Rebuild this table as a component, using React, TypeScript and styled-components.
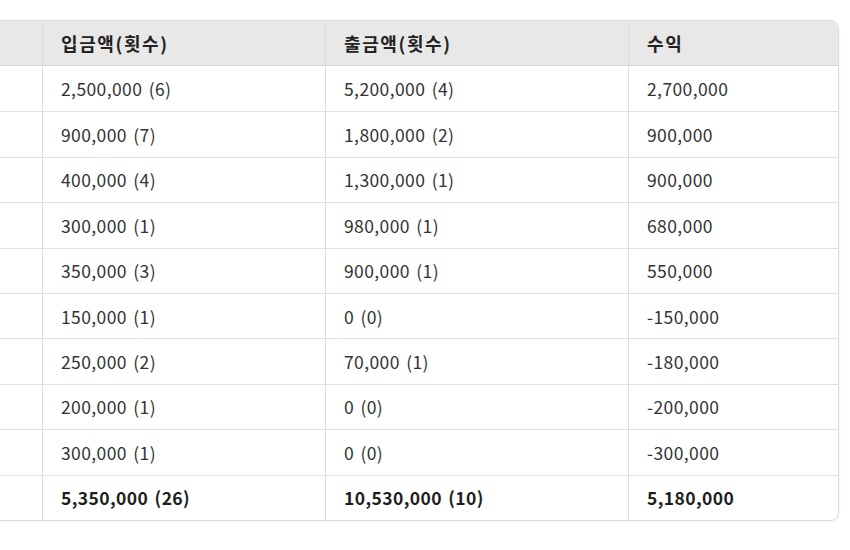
import React from "react";
import styled, { createGlobalStyle } from "styled-components";

// first column is cut off by the viewport in the reference, so its cells stay empty
const rows = [
  { id: 1, deposit: "2,500,000 (6)", withdraw: "5,200,000 (4)", profit: "2,700,000" },
  { id: 2, deposit: "900,000 (7)", withdraw: "1,800,000 (2)", profit: "900,000" },
  { id: 3, deposit: "400,000 (4)", withdraw: "1,300,000 (1)", profit: "900,000" },
  { id: 4, deposit: "300,000 (1)", withdraw: "980,000 (1)", profit: "680,000" },
  { id: 5, deposit: "350,000 (3)", withdraw: "900,000 (1)", profit: "550,000" },
  { id: 6, deposit: "150,000 (1)", withdraw: "0 (0)", profit: "-150,000" },
  { id: 7, deposit: "250,000 (2)", withdraw: "70,000 (1)", profit: "-180,000" },
  { id: 8, deposit: "200,000 (1)", withdraw: "0 (0)", profit: "-200,000" },
  { id: 9, deposit: "300,000 (1)", withdraw: "0 (0)", profit: "-300,000" },
];

const total = { deposit: "5,350,000 (26)", withdraw: "10,530,000 (10)", profit: "5,180,000" };

const App = () => {
  return (
    <>
      <GlobalStyle />
      <Viewport>
        <Table>
          <colgroup>
            <col style={{ width: 160 }} />
            <col style={{ width: 283 }} />
            <col style={{ width: 303 }} />
            <col style={{ width: 210 }} />
          </colgroup>
          <thead>
            <tr>
              <HeadCell />
              <HeadCell>입금액(횟수)</HeadCell>
              <HeadCell>출금액(횟수)</HeadCell>
              <HeadCell>수익</HeadCell>
            </tr>
          </thead>
          <tbody>
            {rows.map((r) => (
              <tr key={r.id}>
                <Cell />
                <Cell>{r.deposit}</Cell>
                <Cell>{r.withdraw}</Cell>
                <Cell>{r.profit}</Cell>
              </tr>
            ))}
            <tr>
              <Cell bold />
              <Cell bold>{total.deposit}</Cell>
              <Cell bold>{total.withdraw}</Cell>
              <Cell bold>{total.profit}</Cell>
            </tr>
          </tbody>
        </Table>
      </Viewport>
    </>
  );
};

export default App;

const GlobalStyle = createGlobalStyle`
  body {
    margin: 0;
    background: #ffffff;
    font-family: "Noto Sans CJK KR", "Noto Sans", sans-serif;
    color: #2b2b2b;
  }
`;

const Viewport = styled.div`
  width: 850px;
  height: 550px;
  overflow: hidden;
  padding-top: 20px;
  box-sizing: border-box;
`;

const Table = styled.table`
  margin-left: -119px;
  width: 958px;
  table-layout: fixed;
  border-collapse: separate;
  border-spacing: 0;
  border: 1px solid #dcdcdc;
  border-radius: 8px;
  overflow: hidden;
  box-shadow: 0 1px 3px rgba(0, 0, 0, 0.06);
`;

const HeadCell = styled.th`
  height: 45px;
  padding: 0 18px;
  box-sizing: border-box;
  text-align: left;
  font-size: 18px;
  font-weight: 700;
  letter-spacing: 1.6px;
  color: #222;
  background: #e8e8e8;
  border-bottom: 1px solid #d6d6d6;
  border-left: 1px solid #dcdcdc;
  white-space: nowrap;

  &:first-child {
    border-left: none;
  }
`;

const Cell = styled.td<{ bold?: boolean }>`
  height: 45.4px;
  padding: 0 18px;
  box-sizing: border-box;
  font-size: 17.5px;
  word-spacing: 2px;
  letter-spacing: 0.4px;
  font-weight: ${({ bold }) => (bold ? 700 : 400)};
  color: ${({ bold }) => (bold ? "#1e1e1e" : "#333")};
  border-left: 1px solid #dcdcdc;
  border-top: 1px solid #e1e1e1;
  white-space: nowrap;

  tr:first-child > & {
    border-top: none;
  }

  &:first-child {
    border-left: none;
  }
`;
